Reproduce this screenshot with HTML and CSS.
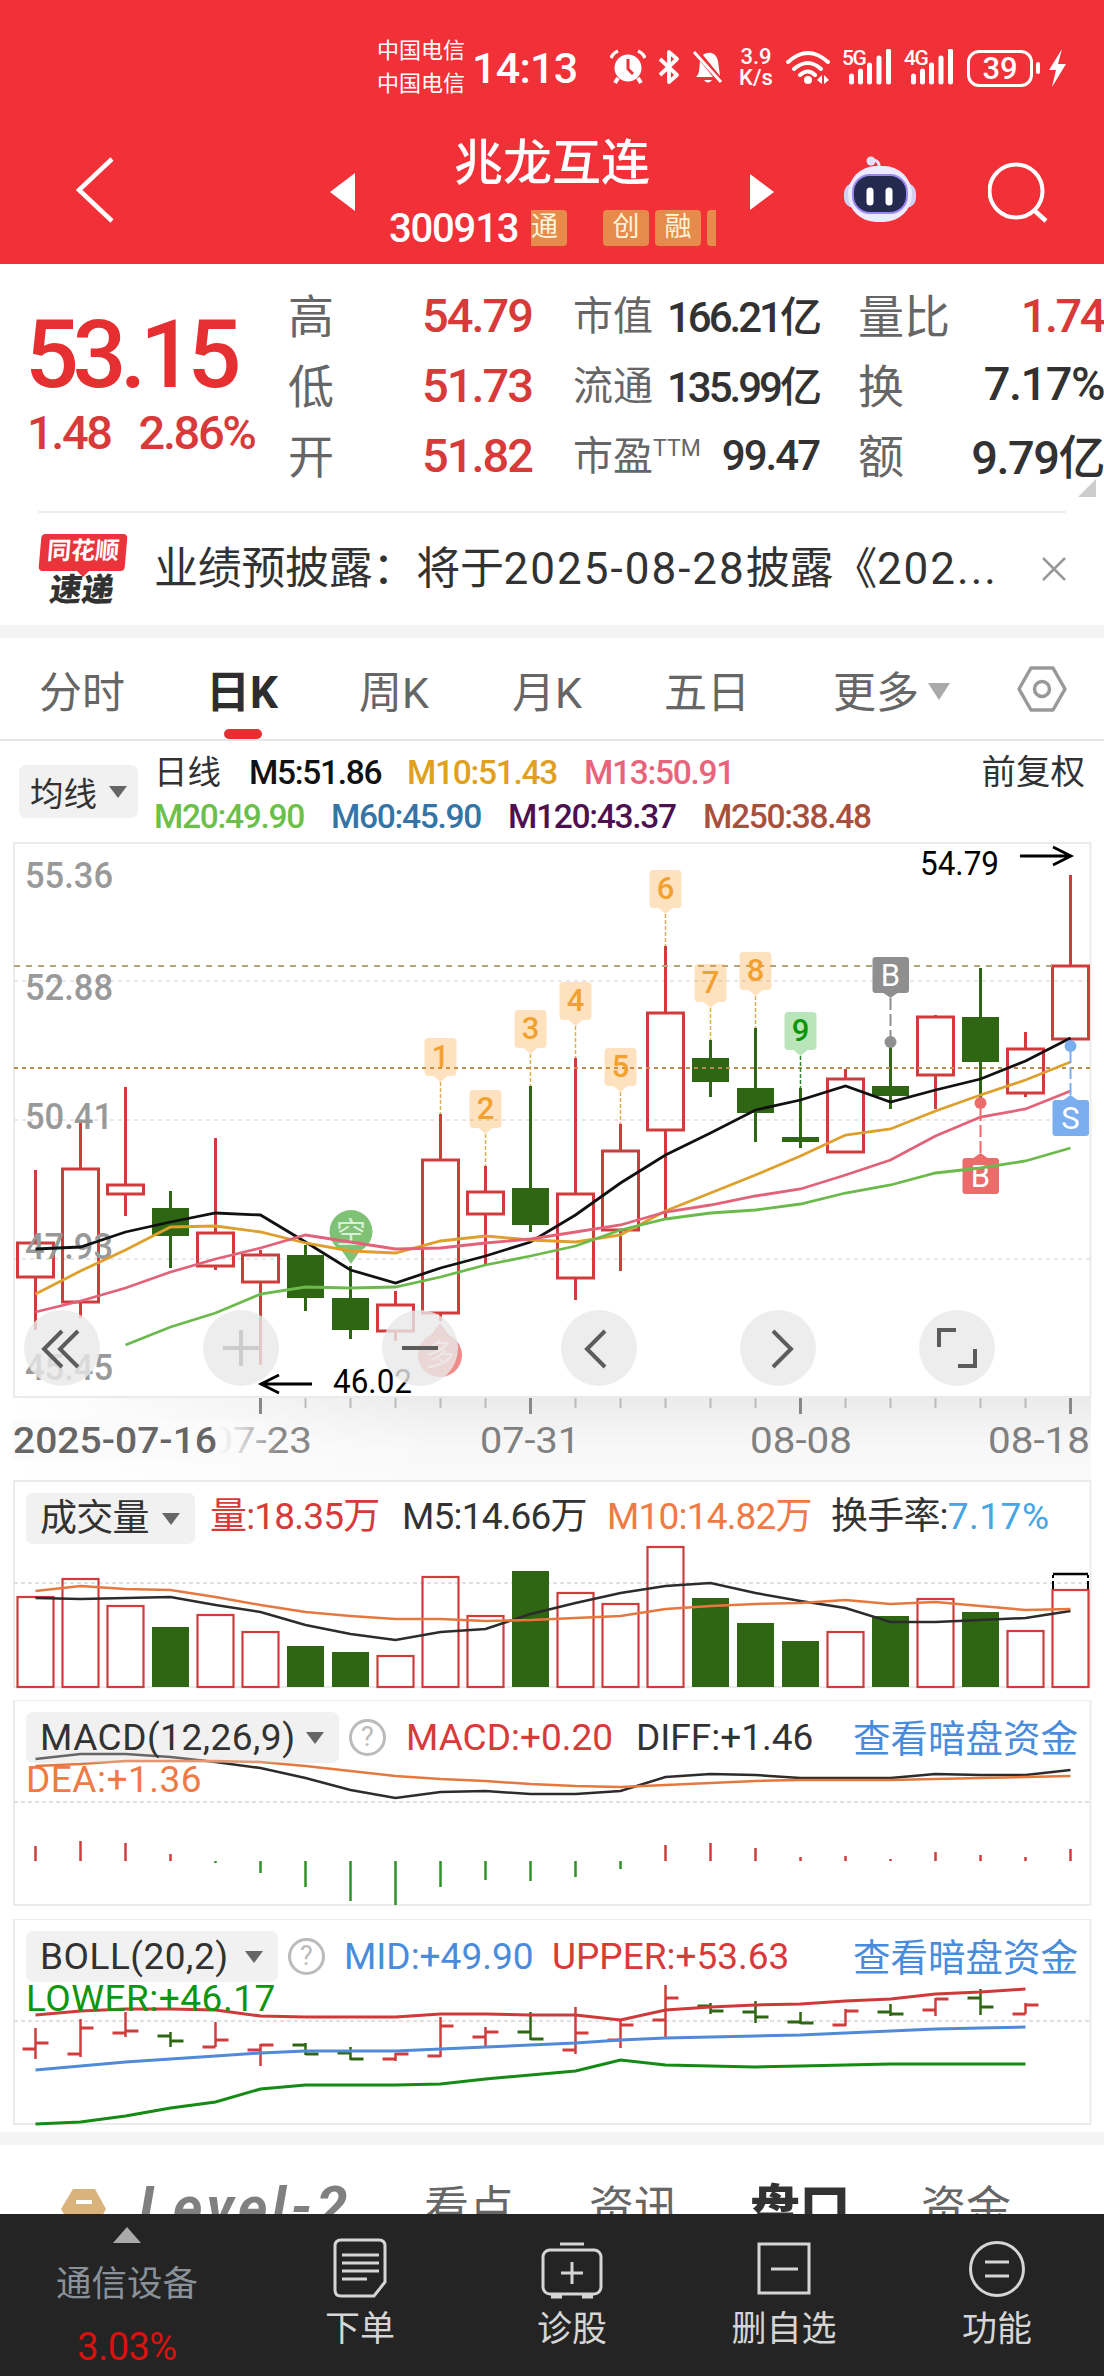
FILE: index.html
```html
<!DOCTYPE html>
<html lang="zh-CN">
<head>
    <meta charset="UTF-8">
    <meta name="viewport" content="width=device-width, initial-scale=1.0">
    <title>兆龙互连 300913</title>
    <link rel="stylesheet" href="styles.css">
</head>
<body>
    <header class="top">
        <!-- 状态栏 -->
        <div class="status">
            <div class="carrier"><span>中国电信</span><span>中国电信</span></div>
            <div class="clock">14:13</div>
            <svg width="36" height="36" viewBox="0 0 36 36"><circle cx="18" cy="19" r="13.5" fill="#fff"/><path d="M1 9q2-5 7-7M35 9q-2-5-7-7" stroke="#fff" stroke-width="3.5" fill="none"/><path d="M8 29l-3 5M28 29l3 5" stroke="#fff" stroke-width="4"/><path d="M18 10v10l5 5" stroke="#f23038" stroke-width="3" fill="none"/></svg>
            <svg width="22" height="36" viewBox="0 0 22 36"><path d="M2 10l17 16-8 7V3l8 7L2 26" stroke="#fff" stroke-width="3.8" fill="none" stroke-linejoin="round"/></svg>
            <svg width="32" height="36" viewBox="0 0 32 36"><path d="M5 27c3-4 2-8 3-15L21 28H4zM11 6c2-3 13-5 15 6l2 15zM12 31h8q-4 5-8 0z" fill="#fff"/><path d="M2 3l27 30" stroke="#fff" stroke-width="3"/></svg>
            <div class="speed"><span>3.9</span><span>K/s</span></div>
            <svg width="44" height="36" viewBox="0 0 44 36"><path d="M2 13q20-18 40 0M8 20q14-12 27 0M14 26q8-7 15 0" stroke="#fff" stroke-width="4" fill="none" stroke-linecap="round"/><circle cx="22" cy="31" r="4" fill="#fff"/><path d="M36 26v9l-5-4zM38 26v9l5-4z" fill="#fff"/></svg>
            <div class="signal"><span>5G</span><svg width="51" height="36" viewBox="0 0 51 36"><path d="M9.500 27v6M18.500 22v11M27.500 16v17M37 9v24M46.500 2v31" stroke="#fff" stroke-width="5" stroke-linecap="round"/></svg></div>
            <div class="signal"><span>4G</span><svg width="51" height="36" viewBox="0 0 51 36"><path d="M9.500 27v6M18.500 22v11M27.500 16v17M37 9v24M46.500 2v31" stroke="#fff" stroke-width="5" stroke-linecap="round"/></svg></div>
            <div class="battery"><span>39</span><i></i><svg width="18" height="38" viewBox="0 0 18 38"><path d="M14 0L1 21h7L4 38 18 15h-8z" fill="#fff"/></svg></div>
        </div>
        <!-- 标题栏 -->
        <div class="nav">
            <svg class="back" width="40" height="66" viewBox="0 0 40 66"><path d="M36 2L3 33l33 31" stroke="#fff" stroke-width="4.500" fill="none"/></svg>
            <svg class="prev" width="26" height="38" viewBox="0 0 26 38"><path d="M25 0v38L0 19z" fill="#fff"/></svg>
            <div class="title">
                <h1>兆龙互连</h1>
                <div class="code"><b>300913</b><em class="tag cut">通</em><em class="tag">创</em><em class="tag">融</em><em class="tag sliver"></em></div>
            </div>
            <svg class="prev" width="26" height="38" viewBox="0 0 26 38"><path d="M0 1v36l24-18z" fill="#fff"/></svg>
            <svg class="robot" width="72" height="68" viewBox="0 0 72 68">
                <path d="M35 13q1-8-7-8" stroke="#dfe2fb" stroke-width="3" fill="none"/><circle cx="27" cy="6" r="4.500" fill="#dfe2fb"/>
                <rect x="0" y="28" width="72" height="25" rx="10" fill="#d3d0f6"/>
                <rect x="4" y="11" width="64" height="56" rx="28" fill="#eceafd"/>
                <rect x="9" y="20" width="54" height="38" rx="17" fill="#232a4e" stroke="#9c86f0" stroke-width="2"/>
                <path d="M26 36v11M45 36v11" stroke="#fff" stroke-width="7" stroke-linecap="round"/>
            </svg>
            <svg width="62" height="62" viewBox="0 0 62 62"><circle cx="28" cy="29" r="26.500" stroke="#fff" stroke-width="4" fill="none"/><path d="M47 49l11 10" stroke="#fff" stroke-width="4.500"/></svg>
        </div>
    </header>

    <!-- 行情 -->
    <section class="quote">
        <div class="price">
            <strong>53.15</strong>
            <p><span>1.48</span><span>2.86%</span></p>
        </div>
        <dl class="big">
            <div><dt>高</dt><dd class="up">54.79</dd></div>
            <div><dt>低</dt><dd class="up">51.73</dd></div>
            <div><dt>开</dt><dd class="up">51.82</dd></div>
        </dl>
        <dl class="mid">
            <div><dt>市值</dt><dd>166.21亿</dd></div>
            <div><dt>流通</dt><dd>135.99亿</dd></div>
            <div><dt>市盈<sup>TTM</sup></dt><dd>99.47</dd></div>
        </dl>
        <dl class="big last">
            <div><dt>量比</dt><dd class="up">1.74</dd></div>
            <div><dt>换</dt><dd>7.17%</dd></div>
            <div><dt>额</dt><dd>9.79亿</dd></div>
        </dl>
        <i class="corner"></i>
    </section>

    <section class="news">
        <div class="logo"><span>同花顺</span><b>速递</b></div>
        <p>业绩预披露：将于<span>2025-08-28</span>披露《<span>202...</span></p>
        <svg width="24" height="24" viewBox="0 0 24 24"><path d="M1 1l22 22M23 1L1 23" stroke="#999" stroke-width="2.500"/></svg>
    </section>

    <nav class="tabs">
        <span>分时</span><span class="active">日K</span><span>周K</span><span>月K</span><span>五日</span><span>更多<i></i></span>
        <svg width="50" height="46" viewBox="0 0 50 46"><path d="M14 2h22l12 21-12 21H14L2 23z" stroke="#999" stroke-width="3.500" fill="none" stroke-linejoin="round"/><circle cx="25" cy="23" r="7.500" stroke="#999" stroke-width="3.500" fill="none"/></svg>
    </nav>

    <!-- 均线 -->
    <section class="ma">
        <div class="pill">均线<i></i></div>
        <div class="ma-values">
            <div class="row1"><span>日线</span><span class="m5">M5:51.86</span><span class="m10">M10:51.43</span><span class="m13">M13:50.91</span></div>
            <div class="row2"><span class="m20">M20:49.90</span><span class="m60">M60:45.90</span><span class="m120">M120:43.37</span><span class="m250">M250:38.48</span></div>
        </div>
        <span class="adjust">前复权</span>
    </section>

    <section class="kline">
        <svg id="kline" width="1104" height="640" viewBox="0 0 1104 640"></svg>
        <div class="tools">
            <button><svg viewBox="0 0 76 76"><path d="M38 21L20 39l18 18M54 21L36 39l18 18"/></svg></button>
            <button class="off"><svg viewBox="0 0 76 76"><path d="M38 20v36M20 38h36"/></svg></button>
            <button><svg viewBox="0 0 76 76"><path d="M20 38h36"/></svg></button>
            <button><svg viewBox="0 0 76 76"><path d="M44 21L26 39l18 18"/></svg></button>
            <button><svg viewBox="0 0 76 76"><path d="M33 21l18 18-18 18"/></svg></button>
            <button><svg viewBox="0 0 76 76"><path d="M37 20H20v17M56 39v17H39"/></svg></button>
        </div>
    </section>

    <section class="panel volume">
        <svg id="volume" width="1104" height="212" viewBox="0 0 1104 212"></svg>
        <div class="head">
            <span class="pill">成交量<i></i></span><span class="up">量:18.35万</span><span>M5:14.66万</span><span class="orange">M10:14.82万</span><span>换手率:<b>7.17%</b></span>
        </div>
    </section>

    <section class="panel macd">
        <svg id="macd" width="1104" height="212" viewBox="0 0 1104 212"></svg>
        <div class="head">
            <span class="pill">MACD(12,26,9)<i></i></span><span class="help">?</span><span class="up">MACD:+0.20</span><span>DIFF:+1.46</span><a>查看暗盘资金</a>
        </div>
        <div class="sub orange">DEA:+1.36</div>
    </section>

    <section class="panel boll">
        <svg id="boll" width="1104" height="212" viewBox="0 0 1104 212"></svg>
        <div class="head">
            <span class="pill">BOLL(20,2)<i></i></span><span class="help">?</span><span class="blue">MID:+49.90</span><span class="up">UPPER:+53.63</span><a>查看暗盘资金</a>
        </div>
        <div class="sub green">LOWER:+46.17</div>
    </section>

    <nav class="level">
        <svg width="46" height="40" viewBox="0 0 46 40"><path d="M12 0h22l11 20-11 20H12L0 20z" fill="#d9b27c"/><path d="M15 13h16" stroke="#fff" stroke-width="4"/></svg>
        <b class="l2">Level-2</b><span>看点</span><span>资讯</span><span class="active">盘口</span><span>资金</span>
    </nav>

    <footer class="bottom">
        <div class="sector"><i></i><span>通信设备</span><em>3.03%</em></div>
        <div class="item"><svg width="62" height="62" viewBox="0 0 62 62"><path d="M12 3h38q6 0 6 6v36L45 59H12q-6 0-6-6V9q0-6 6-6zM13 18h37M13 26h37M13 34h37M13 42h25"/></svg><span>下单</span></div>
        <div class="item"><svg width="62" height="62" viewBox="0 0 62 62"><rect x="2" y="13" width="58" height="44" rx="7"/><path d="M19 7h24M31 25v22M20 36h22"/><path d="M10 59h11M41 59h11" stroke-width="5"/></svg><span>诊股</span></div>
        <div class="item"><svg width="62" height="62" viewBox="0 0 62 62"><rect x="6" y="7" width="50" height="49"/><path d="M18 32h27"/></svg><span>删自选</span></div>
        <div class="item"><svg width="62" height="62" viewBox="0 0 62 62"><circle cx="31" cy="32" r="26.500"/><path d="M19 25h24M19 39h24"/></svg><span>功能</span></div>
    </footer>

    <script src="chart.js"></script>
</body>
</html>
```
FILE: styles.css
```css
* {
    box-sizing: border-box;
}

body {
    margin: 0;
    width: 1104px;
    height: 2376px;
    overflow: hidden;
    position: relative;
    background: #fff;
    color: #323232;
    font-family: Roboto, "Noto Sans CJK SC", sans-serif;
}

h1, p, dl, dd {
    margin: 0;
}

i, em {
    font-style: normal;
}

svg {
    display: block;
}

.up { color: #d83a3a; }
.orange { color: #ef7a45; }
.blue { color: #4a8cdc; }
.green { color: #0f960f; }

/* 顶部 */
.top {
    height: 264px;
    background: #f23038;
    color: #fff;
}

.status {
    display: grid;
    grid-template-columns: 97px 136px 48px 34px 46px 48px 56px 62px 63px 1fr;
    align-items: start;
    height: 132px;
    padding: 49px 0 0 377px;
}

.carrier {
    display: flex;
    flex-direction: column;
    gap: 10px;
    margin-top: -10px;
    font-size: 22px;
    line-height: 23px;
}

.clock {
    font-size: 43px;
    line-height: 38px;
    font-weight: 500;
    letter-spacing: -0.700px;
    margin-left: -2px;
}

.speed {
    display: flex;
    flex-direction: column;
    width: 36px;
    text-align: center;
    font-size: 22px;
    line-height: 21px;
    margin-top: -3px;
    font-weight: 500;
}

.signal {
    position: relative;
}

.signal span {
    position: absolute;
    left: 0;
    top: -1px;
    font-size: 21px;
    line-height: 21px;
    font-weight: 500;
    letter-spacing: -1.500px;
}

.battery {
    display: flex;
    align-items: center;
}

.battery span {
    width: 66px;
    height: 37px;
    border: 3px solid #fff;
    border-radius: 12px;
    text-align: center;
    font-size: 31px;
    line-height: 31px;
    font-weight: 500;
}

.battery i {
    width: 4px;
    height: 12px;
    margin: 0 8px 0 3px;
    border-radius: 2px;
    background: #fff;
}

.nav {
    display: grid;
    grid-template-columns: 254px 59px 361px 94px 144px 1fr;
    height: 132px;
    padding-left: 76px;
}

.back { margin-top: 25px; }
.prev { margin-top: 41px; }
.robot { margin-top: 23px; }
.nav > svg:last-child { margin-top: 30px; }

.title h1 {
    width: 326px;
    text-align: center;
    font-size: 49px;
    line-height: 64px;
    font-weight: 500;
}

.code {
    display: flex;
    align-items: center;
    height: 38px;
    margin-top: 13px;
}

.code b {
    width: 142px;
    font-size: 40px;
    font-weight: 500;
    letter-spacing: -1.200px;
}

.tag {
    width: 46px;
    height: 36px;
    margin-right: 6px;
    border-radius: 4px;
    background: #e68b4c;
    color: #fff3d8;
    text-align: center;
    font-size: 27px;
    line-height: 35px;
}

.tag.cut {
    width: 36px;
    margin-right: 36px;
    text-align: left;
    border-radius: 0 4px 4px 0;
}

.tag.sliver {
    width: 9px;
    margin: 0;
    border-radius: 4px 0 0 4px;
}

/* 行情数据 */
.quote {
    position: relative;
    display: grid;
    grid-template-columns: 288px 285px 285px 246px;
    height: 247px;
    padding-top: 16px;
}

.price {
    padding: 20px 0 0 25px;
    color: #e62f30;
}

.price strong {
    display: block;
    font-size: 95px;
    line-height: 110px;
    font-weight: 500;
    letter-spacing: -6.500px;
}

.price p {
    display: flex;
    gap: 28px;
    margin-top: -2px;
    padding-left: 2px;
    font-size: 47px;
    line-height: 50px;
    font-weight: 500;
    letter-spacing: -2.400px;
    color: #d83a3a;
}

.quote dl > div {
    display: flex;
    justify-content: space-between;
    align-items: center;
    height: 70px;
}

.quote dt {
    margin-top: -4px;
    color: #666;
    font-size: 46px;
}

.quote dd {
    font-size: 47px;
    font-weight: 500;
    letter-spacing: -2px;
}

.big { width: 244px; }

.big.last {
    width: 246px;
}

.big.last dd {
    margin-top: -3px;
    letter-spacing: -1.500px;
}

.big.last .up {
    margin-top: 0;
    letter-spacing: -2.500px;
}

.mid { width: 246px; }

.mid dt {
    font-size: 40px;
}

.mid sup {
    position: relative;
    top: -14px;
    font-size: 23px;
    vertical-align: baseline;
}

.quote .mid dd {
    margin-top: -4px;
    font-size: 42px;
    letter-spacing: -3px;
}

.quote .mid div:last-child dd {
    margin-top: 0;
    letter-spacing: -2px;
}

.corner {
    position: absolute;
    right: 8px;
    bottom: 14px;
    border-left: 18px solid transparent;
    border-bottom: 18px solid #ccc;
}

.news {
    display: flex;
    align-items: center;
    height: 114px;
    margin: 0 38px;
    border-top: 2px solid #eee;
    color: #323232;
}

.news .logo {
    position: relative;
    width: 116px;
    margin-top: 4px;
    padding-left: 2px;
}

.logo span {
    display: block;
    width: 86px;
    height: 37px;
    border-radius: 4px;
    background: #e8343a;
    color: #fff;
    text-align: center;
    font-size: 24px;
    line-height: 35px;
    font-weight: 700;
    transform: skewX(-5deg);
}

.logo::after {
    content: "";
    position: absolute;
    left: 39px;
    top: 37px;
    border: 6px solid transparent;
    border-top-color: #e8343a;
}

.logo b {
    display: block;
    padding-left: 10px;
    font-size: 32px;
    line-height: 38px;
    font-weight: 900;
    transform: skewX(-8deg);
}

.news p {
    width: 888px;
    font-size: 44px;
    line-height: 60px;
    white-space: nowrap;
    letter-spacing: -0.300px;
}

.news p span {
    letter-spacing: 2px;
}

.tabs {
    display: grid;
    grid-template-columns: 167px 153px 153px 152px 169px 184px 1fr;
    align-items: center;
    height: 116px;
    border-top: 13px solid #f4f4f4;
    border-bottom: 2px solid #e6e6e6;
    padding-left: 39px;
    color: #666;
    font-size: 43px;
}

.tabs span {
    position: relative;
}

.tabs .active {
    color: #2e2e2e;
    font-size: 44px;
    font-weight: 700;
}

.tabs .active::after {
    content: "";
    position: absolute;
    left: 18px;
    bottom: -18px;
    width: 38px;
    height: 10px;
    border-radius: 5px;
    background: #e62f30;
}

.tabs i {
    display: inline-block;
    margin-left: 9px;
    border: 11px solid transparent;
    border-top: 17px solid #aaa;
    border-bottom: 0;
    vertical-align: 8px;
}

/* 均线数值 */
.ma {
    display: flex;
    height: 99px;
    padding: 10px 19px 0 19px;
    font-size: 33.500px;
}

.pill {
    display: flex;
    align-items: center;
    justify-content: space-between;
    border-radius: 7px;
    background: rgba(215, 215, 215, 0.350);
    color: #323232;
}

.pill i {
    border: 9px solid transparent;
    border-top: 12px solid #666;
    border-bottom: 0;
}

.ma .pill {
    width: 119px;
    height: 53px;
    margin: 14px 16px 0 0;
    padding: 0 11px;
}

.ma-values {
    flex: 1;
    line-height: 44px;
    font-weight: 500;
    letter-spacing: -1.300px;
}

.row1, .row2 {
    display: grid;
    grid-template-columns: 95px 158px 177px 1fr;
}

.row1 span:first-child {
    font-weight: 400;
    letter-spacing: 0;
}

.row2 {
    grid-template-columns: 177px 177px 195px 1fr;
}

.m5 { color: #111; }
.m10 { color: #e0a020; }
.m13 { color: #e8647a; }
.m20 { color: #6cc04a; }
.m60 { color: #3474a6; }
.m120 { color: #4d1150; }
.m250 { color: #a9503c; }

.adjust {
    line-height: 42px;
    font-size: 34.500px;
}

/* K线图 */
.kline {
    position: relative;
    height: 640px;
}

.tools {
    position: absolute;
    left: 24px;
    top: 470px;
    display: flex;
    gap: 103px;
}

.tools button {
    width: 76px;
    height: 76px;
    padding: 0;
    border: 0;
    border-radius: 50%;
    background: rgba(233, 233, 233, 0.800);
}

.tools path {
    fill: none;
    stroke: #5c5c5c;
    stroke-width: 4;
}

.tools .off path {
    stroke: #ccc;
}

svg text {
    font-family: Roboto, "Noto Sans CJK SC", sans-serif;
}

/* 指标 */
.panel {
    position: relative;
    height: 220px;
}

.panel.boll {
    height: 213px;
}

.panel.macd {
    height: 219px;
}

.head {
    position: absolute;
    left: 26px;
    top: 13px;
    right: 26px;
    display: grid;
    align-items: center;
    height: 51px;
    font-size: 37px;
    white-space: nowrap;
}

.head .pill {
    height: 51px;
    padding: 0 15px 0 14px;
}

.volume .head {
    grid-template-columns: 169px 192px 205px 224px 1fr;
    column-gap: 0;
    letter-spacing: -0.800px;
    line-height: 45px;
}

.volume .head > span + span {
    margin-top: -5px;
    margin-left: 15px;
    margin-right: -15px;
}

.volume b {
    color: #46a5e2;
    font-weight: 400;
    letter-spacing: 0.500px;
}

.macd .head {
    top: 12px;
    grid-template-columns: 313px 67px 230px 1fr auto;
}

.boll .head {
    top: 12px;
    grid-template-columns: 252px 66px 208px 1fr auto;
}

.macd .pill,
.boll .pill {
    letter-spacing: 0.500px;
}

.help {
    width: 37px;
    height: 37px;
    margin-left: 10px;
    border: 3px solid #bbb;
    border-radius: 50%;
    color: #bbb;
    text-align: center;
    font-size: 27px;
    line-height: 31px;
}

.head a {
    margin-top: -5px;
    color: #4a8cdc;
    font-size: 37.500px;
}

.sub {
    position: absolute;
    left: 26px;
    top: 58px;
    font-size: 37px;
    line-height: 44px;
    letter-spacing: 0.500px;
}

/* 底部标签 */
.level {
    display: grid;
    grid-template-columns: 78px 285px 165px 161px 171px 1fr;
    height: 90px;
    border-top: 13px solid #f4f4f4;
    padding: 31px 0 0 61px;
    white-space: nowrap;
    color: #666;
    font-size: 45px;
    line-height: 66px;
}

.level svg {
    margin-top: 13px;
}

.level .l2 {
    color: #808080;
    font-size: 56px;
    line-height: 62px;
    font-style: italic;
    letter-spacing: 4.500px;
}

.level .active {
    color: #323232;
    font-size: 50px;
    font-weight: 900;
}

.bottom {
    position: absolute;
    left: 0;
    right: 0;
    bottom: 0;
    display: grid;
    grid-template-columns: 254px 212px 212px 212px 1fr;
    height: 162px;
    background: #242424;
    color: #d5d5d5;
    font-size: 35px;
    line-height: 46px;
    text-align: center;
}

.sector {
    display: flex;
    flex-direction: column;
    align-items: center;
    padding-top: 13px;
    color: #8a9199;
}

.sector span {
    font-size: 35.500px;
}

.sector i {
    border: 14px solid transparent;
    border-bottom: 16px solid #aaa;
    border-top: 0;
    margin-bottom: 18px;
}

.sector em {
    margin-top: 17px;
    color: #d8120e;
    font-size: 38px;
    letter-spacing: -0.500px;
}

.item {
    display: flex;
    flex-direction: column;
    align-items: center;
    padding-top: 23px;
}

.item svg {
    fill: none;
    stroke: #d5d5d5;
    stroke-width: 3;
    margin-bottom: 8px;
}
```
FILE: chart.js
```js
const RED = '#d03c3c';
const GREEN = '#2f6613';
const cx = i => 35.5 + 45 * i;

// [颜色, 最高, 最低, 实体上沿, 实体下沿]
const candles = [
    ['r', 330, 490, 403, 437], ['r', 283, 478, 329, 462], ['r', 247, 376, 345, 354], ['g', 351, 428, 368, 396],
    ['r', 298, 430, 393, 426], ['r', 410, 525, 415, 442], ['g', 405, 471, 415, 458], ['g', 426, 499, 458, 490],
    ['r', 451, 501, 465, 491], ['r', 274, 481, 320, 473], ['r', 326, 425, 352, 374], ['g', 246, 392, 348, 385],
    ['r', 218, 460, 354, 438], ['r', 284, 431, 311, 390], ['r', 106, 378, 173, 290], ['g', 200, 257, 218, 242],
    ['g', 188, 302, 248, 273], ['g', 248, 308, 297, 302], ['r', 229, 312, 239, 312], ['g', 202, 269, 246, 256],
    ['r', 175, 269, 177, 235], ['g', 128, 263, 177, 222], ['r', 192, 257, 209, 253], ['r', 35, 205, 126, 199]
];

const ma5 = [409, 407, 392, 382, 373, 375, 402, 430, 443, 428, 416, 402, 375, 343, 315, 293, 270, 260, 246, 262, 250, 239, 221, 198];
const ma10 = [454, 431, 410, 387, 386, 392, 403, 411, 413, 401, 396, 400, 402, 395, 371, 353, 335, 316, 295, 289, 271, 255, 240, 222];
const ma13 = [472, 461, 448, 432, 419, 408, 395, 402, 409, 408, 403, 399, 392, 385, 372, 365, 356, 349, 335, 320, 296, 277, 269, 251];
const ma20 = [505, 487, 473, 454, 447, 448, 447, 437, 425, 416, 406, 390, 379, 373, 370, 364, 353, 345, 333, 328, 321, 308];

function line(x1, y1, x2, y2, color, w, dash) {
    return `<line x1="${x1}" y1="${y1}" x2="${x2}" y2="${y2}" stroke="${color}" stroke-width="${w}"${dash ? ` stroke-dasharray="${dash}"` : ''}/>`;
}

function curve(ys, color, w, start = 0) {
    const pts = ys.map((y, i) => cx(i + start) + ',' + y).join(' ');
    return `<polyline points="${pts}" fill="none" stroke="${color}" stroke-width="${w}"/>`;
}

function label(x, y, str, size, width, color, weight = 400) {
    return `<text x="${x}" y="${y}" font-size="${size}" font-weight="${weight}" fill="${color}" textLength="${width}" lengthAdjust="spacingAndGlyphs">${str}</text>`;
}

function frame(top, bottom) {
    return `<rect x="14" y="${top}" width="1076.5" height="${bottom - top}" fill="none" stroke="#ebebeb" stroke-width="2"/>`;
}

function drawKline() {
    // 日期轴背景
    let s = '<defs><linearGradient id="v" x2="0" y2="1"><stop offset="0" stop-color="#ebebeb"/><stop offset=".6" stop-color="#f8f8f8"/><stop offset="1" stop-color="#fafafa"/></linearGradient>' +
        '<linearGradient id="h"><stop offset="0" stop-color="#fff"/><stop offset=".12" stop-color="#fff" stop-opacity=".7"/><stop offset=".4" stop-color="#fff" stop-opacity="0"/></linearGradient></defs>' +
        '<rect x="13" y="558" width="1078" height="82" fill="url(#v)"/><rect x="13" y="558" width="1078" height="82" fill="url(#h)"/>';
    s += frame(3, 557);
    [141, 280, 419].forEach(y => s += line(14, y, 1090, y, '#e6e6e6', 2, '4 4'));

    candles.forEach(([c, hi, lo, top, bot], i) => {
        const x = cx(i);
        if (c === 'r') {
            s += line(x, hi, x, top, RED, 3) + line(x, bot, x, lo, RED, 3);
            s += `<rect x="${x - 18}" y="${top}" width="36" height="${bot - top}" fill="none" stroke="${RED}" stroke-width="3"/>`;
        } else {
            s += line(x, hi, x, lo, GREEN, 3);
            s += `<rect x="${x - 18.5}" y="${top}" width="37" height="${bot - top}" fill="${GREEN}"/>`;
        }
    });

    // 价格刻度
    [['55.36', 48], ['52.88', 160], ['50.41', 289], ['47.93', 419], ['45.45', 540]]
        .forEach(([t, y]) => s += label(25, y, t, 37, 88, '#999', 500));

    // 多空气泡
    s += '<path d="M351 424l-9-13a21.500 21.500 0 1 1 18 0z" fill="#7fc276"/>' + label(336, 403, '空', 30, 30, '#d9efd6');
    s += '<path d="M440 483l-9 12a22 22 0 1 0 18 0z" fill="#f08a88"/>' + label(425, 525, '多', 30, 30, '#fde0df');

    s += line(14, 126, 1052, 126, '#b3a577', 2, '6 6');
    s += line(14, 228, 1090, 228, '#bd8b4d', 2, '4 4');

    // 九转序列
    for (let n = 1; n <= 9; n++) {
        const x = cx(n + 8), hi = candles[n + 8][1], t = hi - 76;
        const c = n === 9 ? '#0a960a' : '#f2a12e';
        s += `<path d="M${x - 12} ${t}h24q4 0 4 4v30q0 4-4 4h-5l-7 6-7-6h-5q-4 0-4-4V${t + 4}q0-4 4-4z" fill="${n === 9 ? '#1ba81b' : '#fba02c'}" fill-opacity=".3"/>`;
        s += line(x, t + 44, x, hi, n === 9 ? '#2f8a2f' : '#d9ae55', 1.500, '4 2');
        s += `<text x="${x}" y="${t + 29}" font-size="31" font-weight="500" fill="${c}" text-anchor="middle">${n}</text>`;
    }

    s += curve(ma5, '#111', 2.800) + curve(ma10, '#dda02c', 2.800) + curve(ma13, '#e2627a', 2.800);

    // 买卖点
    const mark = (i, dotY, top, color, ch, tip) => {
        const x = cx(i);
        const end = tip === 'down' ? top + 36 : top;
        const d = tip === 'down' ? 5 : -5;
        return line(x, end + d, x, dotY, color, 2, '12 4') +
            `<circle cx="${x}" cy="${dotY}" r="6" fill="${color}"/>` +
            `<rect x="${x - 18}" y="${top}" width="36.5" height="36" rx="3" fill="${color}"/>` +
            `<path d="M${x - 7} ${end}l7 ${d}l7 ${-d}z" fill="${color}"/>` +
            `<text x="${x}" y="${top + 29}" font-size="31" fill="#fff" text-anchor="middle">${ch}</text>`;
    };
    s += mark(19, 202, 117, '#8f8f8f', 'B', 'down');
    s += mark(21, 263, 318, '#ec6b6b', 'B', 'up');
    s += mark(23, 206, 260, '#7aaeef', 'S', 'up');
    s += curve(ma20, '#6cba4b', 2.800, 2);

    // 最高最低价
    s += label(920, 35, '54.79', 33, 79, '#000') + '<path d="M1020 16h50M1053 7l18 9-18 9" stroke="#000" stroke-width="2.800" fill="none"/>';
    s += label(333, 553, '46.02', 33, 79, '#000') + '<path d="M312 544h-50M279 535l-18 9 18 9" stroke="#000" stroke-width="2.800" fill="none"/>';

    for (let i = 5; i < 24; i++) {
        const major = i % 6 === 5;
        s += line(cx(i), 558, cx(i), major ? 574 : 568, major ? '#888' : '#bbb', major ? 3 : 2);
    }
    s += label(210, 613, '07-23', 37, 102, '#888');
    s += '<defs><linearGradient id="fade"><stop offset="0" stop-color="#fbfbfb"/><stop offset=".78" stop-color="#fbfbfb"/><stop offset=".86" stop-color="#fbfbfb" stop-opacity=".7"/><stop offset="1" stop-color="#fbfbfb" stop-opacity="0"/></linearGradient></defs><rect x="13" y="580" width="265" height="40" fill="url(#fade)"/>';
    s += label(13, 613, '2025-07-16', 37, 204, '#666', 500);
    s += label(480, 613, '07-31', 37, 100, '#808080') + label(750, 613, '08-08', 37, 102, '#808080') + label(988, 613, '08-18', 37, 102, '#808080');
    document.getElementById('kline').innerHTML = s;
}

function drawVolume() {
    const tops = [117, 99, 126, 147, 135, 152, 166, 172, 176, 97, 136, 91, 113, 124, 67, 118, 143, 161, 152, 136, 119, 132, 151, 110];
    const green = [3, 6, 7, 11, 15, 16, 17, 19, 21];
    let s = frame(1, 207) + line(14, 103, 1090, 103, '#d8d8d8', 1.500, '4 3');
    tops.forEach((t, i) => {
        s += green.includes(i)
            ? `<rect x="${cx(i) - 18.5}" y="${t}" width="37" height="${207 - t}" fill="${GREEN}"/>`
            : `<rect x="${cx(i) - 18}" y="${t}" width="36" height="${207 - t}" fill="none" stroke="${RED}" stroke-width="2.200"/>`;
    });
    // 预估成交量
    s += '<path d="M1053 94h35" stroke="#000" stroke-width="2.500"/><path d="M1053 95v14M1088 95v14" stroke="#000" stroke-width="2" stroke-dasharray="3 3 10"/>';
    s += curve([118, 119, 118, 117, 125, 132, 145, 154, 160, 152, 149, 134, 123, 113, 106, 103, 113, 121, 128, 142, 142, 140, 138, 131], '#2c2c2c', 2.500);
    s += curve([111, 106, 109, 110, 117, 125, 132, 136, 139, 139, 141, 140, 138, 136, 129, 126, 124, 123, 120, 124, 122, 126, 130, 129], '#e5783f', 2.500);
    document.getElementById('volume').innerHTML = s;
}

function drawMacd() {
    const ends = [146, 141, 143, 154, 163, 173, 187, 201, 205, 187, 180, 181, 177, 169, 145, 143, 148, 157, 156, 159, 152, 155, 157, 149];
    let s = frame(0, 205) + line(14, 102, 1090, 102, '#d8d8d8', 1.500, '4 3');
    ends.forEach((y, i) => s += line(cx(i), 161, cx(i), y, y < 161 ? RED : '#2e9326', 2.500));
    s += curve([59, 54, 54, 57, 62, 68, 78, 90, 98, 92, 91, 94, 94, 91, 77, 74, 75, 78, 78, 78, 74, 75, 75, 70], '#2c2c2c', 2.500);
    s += curve([66, 64, 61, 61, 61, 62, 66, 71, 76, 79, 81, 84, 86, 87, 85, 83, 81, 80, 80, 80, 79, 78, 77, 76], '#e5783f', 2.500);
    document.getElementById('macd').innerHTML = s;
}

function drawBoll() {
    // [颜色, 最高, 最低, 开, 收]
    const bars = [
        ['r', 109, 140, 130, 124], ['r', 100, 138, 135, 109], ['r', 93, 118, 114, 112], ['g', 113, 128, 117, 122],
        ['r', 103, 128, 128, 121], ['r', 125, 147, 131, 126], ['g', 124, 136, 126, 135], ['g', 128, 141, 134, 140],
        ['r', 134, 142, 140, 135], ['r', 98, 138, 137, 107], ['r', 108, 127, 118, 113], ['g', 93, 121, 113, 120],
        ['r', 88, 135, 131, 114], ['r', 101, 129, 121, 106], ['r', 66, 118, 101, 79], ['g', 84, 95, 87, 92],
        ['g', 82, 104, 93, 98], ['g', 93, 105, 103, 104], ['r', 90, 107, 106, 92], ['g', 85, 97, 93, 95],
        ['r', 79, 97, 91, 80], ['g', 70, 96, 79, 88], ['r', 84, 95, 95, 86]
    ];
    let s = frame(0, 205) + line(14, 102, 1090, 102, '#d8d8d8', 1.500, '4 3');
    bars.forEach(([c, hi, lo, o, cl], i) => {
        const x = cx(i), col = c === 'r' ? RED : GREEN;
        s += line(x, hi, x, lo, col, 2.500) + line(x - 13, o, x, o, col, 3) + line(x, cl, x + 13, cl, col, 3);
    });
    s += curve([96, 92, 90, 90, 91, 97, 98, 98, 98, 95, 95, 96, 96, 101, 91, 88, 86, 85, 82, 80, 75, 73, 70], '#cc3a3a', 3);
    s += curve([151, 147, 143, 140, 137, 134, 132, 132, 132, 130, 128, 126, 124, 121, 119, 118, 117, 116, 114, 112, 110, 109, 108], '#4f8bd8', 3);
    s += curve([205, 203, 197, 189, 183, 170, 166, 166, 166, 165, 160, 156, 152, 141, 146, 147, 148, 147, 146, 145, 145, 145, 145], '#158a15', 3);
    document.getElementById('boll').innerHTML = s;
}

drawKline();
drawVolume();
drawMacd();
drawBoll();
```
